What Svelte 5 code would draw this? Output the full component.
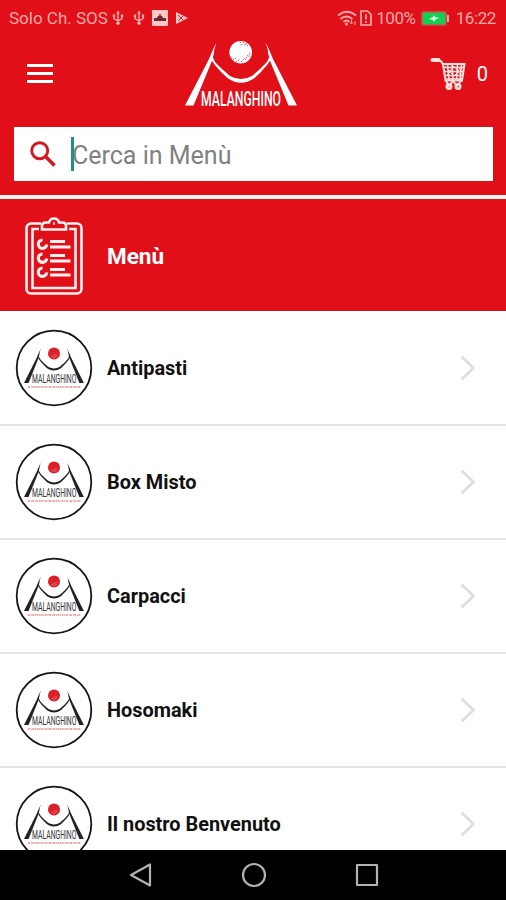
<script>
  const categories = ["Antipasti", "Box Misto", "Carpacci", "Hosomaki", "Il nostro Benvenuto"];

  let search = $state("");
  let cartCount = $state(0);
</script>

{#snippet usb()}
  <svg class="usb" width="12" height="16" viewBox="0 0 12 16">
    <path d="M6 2v10M2 6v2.5L6 11l4-2.5V6" fill="none" stroke="currentColor" stroke-width="1.4" />
    <path d="M4 3.5 6 .5l2 3zM.8 4.5h2.4v2.4H.8zM8.8 4.5h2.4v2.4H8.8z" fill="currentColor" />
    <circle cx="6" cy="13.2" r="1.8" fill="currentColor" />
  </svg>
{/snippet}

{#snippet mountain()}
  <path d="M0 65.500 24 19Q28 9 31.500 2.500 29 9 28.500 15L26.500 22 8.500 65.500z" />
  <path d="M112 65.500 88 19Q84 9 80.500 2.500 83 9 83.500 15L85.500 22 103.500 65.500z" />
  <path d="M27.500 15C28 21 32 24 37 29L45 36Q56 42 67 36L75 29C80 24 84 21 84.500 15L86 19C82 26 79 28 76 32L69 38.500Q56 47 43 38.500L36 32C33 28 30 26 26 19z" />
{/snippet}

<div class="screen">
  <header>
    <div class="status">
      <div class="status-left">
        <span class="carrier">Solo Ch. SOS</span>
        {@render usb()}
        <span class="second">{@render usb()}</span>
        <svg class="picture" width="16" height="16" viewBox="0 0 16 16">
          <path d="M0 0h16v16H0z" fill="currentColor" />
          <path d="M2 8h3l1-2h1l1-3 1 3h1l1 2h3v3H2z" fill="#692b35" />
        </svg>
        <svg class="play" width="14" height="14" viewBox="0 0 14 14">
          <path d="M1 1v12l12-6z" fill="currentColor" />
          <path d="m3 4 5 5M3 10l5-5" stroke="#e10f18" stroke-width=".9" />
        </svg>
      </div>
      <div class="status-right">
        <svg class="wifi" width="20" height="16" viewBox="0 0 20 16">
          <path d="M1 5.500Q10-2 19 5.500M3.500 9q6-5 12 0M6.500 12q3-3 6 0" fill="none" stroke="currentColor" stroke-width="2" />
          <circle cx="9.500" cy="14" r="1.500" fill="currentColor" />
          <path d="M14.500 10v4m-1.500-1.500 1.500 1.500 1.500-1.500M18 15v-4" fill="none" stroke="currentColor" />
        </svg>
        <svg class="sim" width="12" height="16" viewBox="0 0 12 16">
          <path d="M1 1h6.500l3.500 3.500V15H1z" fill="none" stroke="currentColor" stroke-width="1.700" />
          <path d="M6 4.500v5M6 11v2" stroke="currentColor" stroke-width="1.700" />
        </svg>
        <span class="percent">100%</span>
        <svg class="battery" width="29" height="15" viewBox="0 0 29 15">
          <rect x="1" y="1" width="24" height="13" rx="1.500" fill="#12cf53" stroke="#c3584f" stroke-width="1.500" />
          <path d="M27 4v7" stroke="currentColor" stroke-width="2" />
          <path d="m8 8 4-2 1-2 1 2 4 1-4 2-1 2-1-2z" fill="#d7ffe2" />
        </svg>
        <span class="clock">16:22</span>
      </div>
    </div>

    <div class="toolbar">
      <button class="menu-button" aria-label="Apri menu">
        <i></i><i></i><i></i>
      </button>

      <svg class="brand" width="112" height="72" viewBox="0 0 112 72">
        <g fill="#fff">{@render mountain()}</g>
        <circle cx="55.700" cy="12.300" r="11.300" fill="#fff" />
        <path d="m46 17 2 1m0 2 3-2m0 4 4-3m1 3 4-4m0 2 3-5m1 2 1-5M55 2l2 3m1-3 3 4m0-3 2 4" stroke="#e10f18" stroke-width=".7" stroke-dasharray="1.500 .8" />
        <text transform="translate(16 65.500) scale(.64 1)" textLength="125" lengthAdjust="spacingAndGlyphs">MALANGHINO</text>
      </svg>

      <div class="cart">
        <svg width="36" height="34" viewBox="0 0 36 34" fill="none" stroke="#ffe2e0">
          <path d="M2.500 3h6" stroke-width="4" stroke-linecap="round" />
          <path d="M9 3.500q3 .5 4 4l2.500 16H32l2.500-16.500H13" stroke-width="2" />
          <path d="M13.500 10.500h20M14 14.500h19M14.500 18.500h18M15 22h17" stroke-width="1.600" />
          <path d="m17.500 7 1.500 16m3-16 1 16m4.500-16-1 16m5-16-1.500 16" stroke-width="1.600" />
          <path d="m15 9 5 5 4-5 4 5 4-5M16 19l4-4 4 4 4-4 4 4" stroke-width="1" />
          <path d="m16 24 3 5 4-5 4 5 4-5" stroke-width="2" />
          <circle cx="19" cy="29.500" r="2.300" stroke-width="2.400" />
          <circle cx="28" cy="29.500" r="2.300" stroke-width="2.400" />
        </svg>
        <span>{cartCount}</span>
      </div>
    </div>

    <label class="search">
      <svg width="26" height="26" viewBox="0 0 26 26" fill="none" stroke="#d41920">
        <circle cx="9.700" cy="9.700" r="8" stroke-width="2.900" />
        <path d="m15.500 15.500 9 9" stroke-width="3.500" />
      </svg>
      <span class="caret"></span>
      <input bind:value={search} placeholder="Cerca in Menù" />
    </label>
  </header>

  <div class="title-row">
    <svg width="58" height="78" viewBox="0 0 58 78" fill="none" stroke="#fff1ef">
      <path d="M16 6.500H6A4.500 4.500 0 0 0 1.500 11v61A4.500 4.500 0 0 0 6 76.500h46a4.500 4.500 0 0 0 4.500-4.500V11A4.500 4.500 0 0 0 52 6.500H42" stroke-width="2.600" />
      <path d="M14 12H7.500v59h43V12H44" stroke-width="2.600" />
      <path d="M17 12.500V8.500q0-3 4-3h3q1-4 5-4t5 4h3q4 0 4 3v4z" stroke-width="2.600" />
      <path d="M29 5v3" stroke-width="1.500" />
      {#each [27.5, 41.5, 55.5] as y}
        <path d="M17.500 {y - 4.500}a4.200 4.200 0 1 0 4.200 4.500" stroke-width="3.200" />
        <path d="M25 {y - 3}h15M25 {y + 2.500}h20.500" stroke-width="3" />
      {/each}
    </svg>
    <h1>Menù</h1>
  </div>

  <main>
    {#each categories as name}
      <a class="row" href="#{name}">
        <svg class="badge" width="78" height="78" viewBox="0 0 78 78">
          <circle cx="39" cy="39" r="37.300" fill="#fff" stroke="#151515" stroke-width="1.800" />
          <g transform="translate(9 18) scale(.535 .55)" fill="#222">{@render mountain()}</g>
          <circle cx="39" cy="24.500" r="6" fill="#dc2028" />
          <path d="m36 28 6-3m-4 4 4-2" stroke="#f4a3a5" stroke-width=".5" />
          <text class="wordmark" transform="translate(17 54) scale(.6 1)" textLength="74" lengthAdjust="spacingAndGlyphs">MALANGHINO</text>
          <path d="M13 58h53" stroke="#e68b91" stroke-width="1.600" stroke-dasharray="2 .7 1 .5" />
        </svg>
        <span>{name}</span>
        <svg class="chevron" width="16" height="26" viewBox="0 0 16 26">
          <path d="m1.500 1.500 12 11.500-12 11.500" fill="none" stroke="#dedede" stroke-width="2.800" />
        </svg>
      </a>
    {/each}
  </main>

  <nav>
    <svg width="24" height="26" viewBox="0 0 24 26"><path d="M21 2.500v21L2 13z" /></svg>
    <svg width="26" height="26" viewBox="0 0 26 26"><circle cx="13" cy="13" r="11" /></svg>
    <svg width="24" height="24" viewBox="0 0 24 24"><path d="M2 2h20v20H2z" /></svg>
  </nav>
</div>

<style>
  :global(body) {
    margin: 0;
  }

  .screen {
    width: 506px;
    height: 900px;
    display: flex;
    flex-direction: column;
    overflow: hidden;
    background: #fff;
    font-family: Roboto, "Liberation Sans", sans-serif;
  }

  svg {
    display: block;
    flex: none;
    overflow: visible;
  }

  header {
    box-sizing: border-box;
    height: 199px;
    flex: none;
    background: #e10f18;
    border-bottom: 4px solid #fff2ef;
  }

  .status {
    height: 36px;
    display: flex;
    justify-content: space-between;
    padding: 0 10px 0 9px;
    box-sizing: border-box;
    color: #ffaaa8;
    font-size: 17px;
  }

  .status-left,
  .status-right {
    display: flex;
    align-items: center;
  }

  .carrier {
    width: 103px;
    white-space: nowrap;
  }

  .second {
    margin-left: 9px;
  }

  .picture {
    margin-left: 7px;
    color: #ffc6c4;
  }

  .play {
    margin-left: 7px;
    color: #ffc6c4;
  }

  .sim {
    margin: 0 4px 0 3px;
  }

  .percent,
  .clock {
    letter-spacing: -0.4px;
  }

  .battery {
    margin: 0 6px 0 5px;
  }

  .toolbar {
    height: 91px;
    display: grid;
    grid-template-columns: 185px 112px 1fr;
    align-items: start;
  }

  .menu-button {
    width: 26px;
    margin: 28px 0 0 27px;
    padding: 0;
    border: 0;
    background: none;
    display: flex;
    flex-direction: column;
    gap: 5px;
  }

  .menu-button i {
    width: 26px;
    height: 3px;
    background: #fff;
  }

  .brand {
    margin-top: 4px;
  }

  .brand text {
    font-size: 20px;
    font-weight: 500;
    fill: #fff;
  }

  .cart {
    display: flex;
    align-items: center;
    justify-content: flex-end;
    gap: 11px;
    margin: 21px 18px 0 0;
    color: #fff;
    font-size: 20px;
  }

  .search {
    height: 54px;
    margin: 0 13px 0 14px;
    padding-left: 16px;
    box-sizing: border-box;
    display: flex;
    align-items: center;
    background: #fff;
  }

  .caret {
    width: 3px;
    height: 34px;
    margin-left: 15px;
    background: #20907f;
  }

  input {
    flex: 1;
    min-width: 0;
    padding: 0;
    margin: 3px 0 0 -2px;
    border: 0;
    outline: 0;
    background: transparent;
    font: 25px Roboto, "Liberation Sans", sans-serif;
  }

  input::placeholder {
    color: #818181;
    opacity: 1;
  }

  .title-row {
    box-sizing: border-box;
    height: 112px;
    flex: none;
    display: flex;
    align-items: center;
    gap: 24px;
    padding: 2px 0 0 25px;
    background: #e10f18;
    color: #fff;
  }

  h1 {
    margin: 0 0 1px;
    font-size: 22.5px;
    font-weight: 700;
  }

  main {
    box-sizing: border-box;
    height: 539px;
    padding-top: 1px;
    flex: none;
    overflow: hidden;
  }

  .row {
    height: 114px;
    box-sizing: border-box;
    display: flex;
    align-items: center;
    padding: 0 30px 0 15px;
    border-bottom: 2px solid #e6e6e6;
    color: #111;
    font-size: 19.9px;
    font-weight: 700;
    text-decoration: none;
  }

  .row span {
    flex: 1;
    margin: 1px 0 0 14px;
  }

  .wordmark {
    font-size: 12px;
    font-weight: 400;
    fill: #333;
  }

  nav {
    height: 50px;
    flex: none;
    display: flex;
    align-items: center;
    justify-content: center;
    gap: 88px;
    padding-left: 1px;
    background: #000;
  }

  nav svg {
    fill: none;
    stroke: #b5b1b1;
    stroke-width: 2.2;
    stroke-linejoin: round;
  }
</style>
